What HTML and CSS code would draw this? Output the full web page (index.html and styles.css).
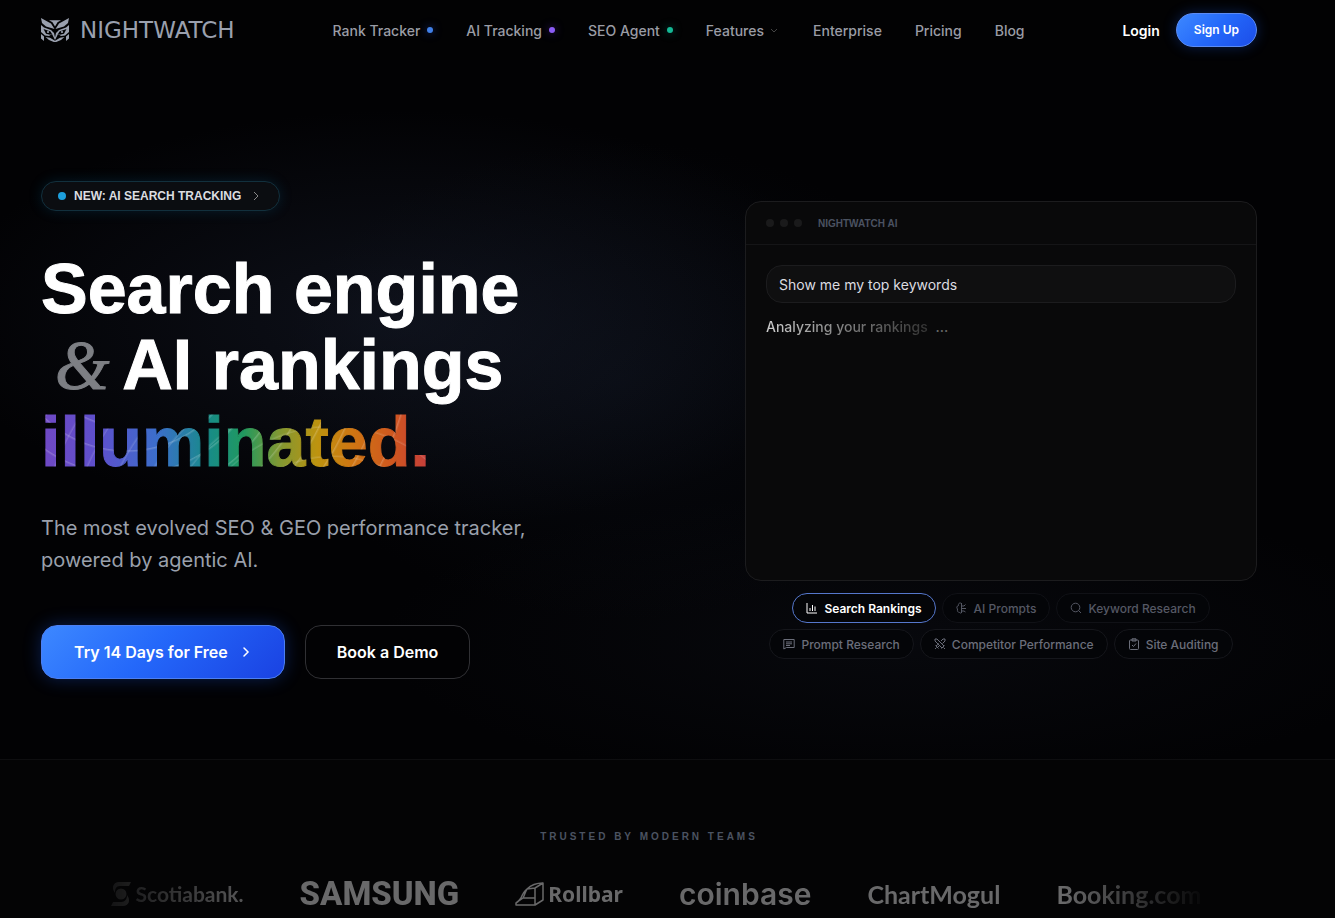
FILE: index.html
```
<!doctype html>
<html lang="en">
<head>
<meta charset="utf-8">
<meta name="viewport" content="width=device-width, initial-scale=1">
<title>Nightwatch</title>
<link rel="stylesheet" href="styles.css">
</head>
<body>
<header class="header wrap">
	<a class="brand" href="#">
		<svg width="28" height="24" viewBox="0 0 28 24" fill="currentColor" aria-hidden="true">
			<path d="M0 0l10 5.500 3.500 5.500L5 8.500 1 5z"/>
			<path d="M28 0L18 5.500 14.500 11 23 8.500 27 5z"/>
			<path d="M8 2.200h12l-3.500 2L14 8.500l-2.500-4.300z"/>
			<path d="M0 7l3 2.500 7 2.500 3 3 1 4.500 1-4.500 3-3 7-2.500L28 7v7l-4 3.500-4 .5-3-2-3 6-3-6-3 2-4-.5L0 14z"/>
			<path d="M2.500 11l7 2.500L11 16l-2 .8-4-1zM25.500 11l-7 2.500L17 16l2 .8 4-1z" fill="#020204"/>
			<circle cx="7" cy="14" r="1.100"/><circle cx="21" cy="14" r="1.100"/>
			<path d="M0 16l3 2.500V23l-3-2.500zM28 16l-3 2.500V23l3-2.500zM4.500 19l4.500.8 5 3 5-3 4.500-.8-3.500 3-6 2.500L8 22z"/>
		</svg>
		<span>NIGHTWATCH</span>
	</a>
	<nav class="nav">
		<a href="#">Rank Tracker <i class="dot blue"></i></a>
		<a href="#">AI Tracking <i class="dot purple"></i></a>
		<a href="#">SEO Agent <i class="dot green"></i></a>
		<a class="drop" href="#">Features
			<svg width="12" height="12" viewBox="0 0 12 12" fill="none" stroke="#444" aria-hidden="true"><path d="M3 5l3 3 3-3"/></svg>
		</a>
		<a href="#">Enterprise</a>
		<a href="#">Pricing</a>
		<a href="#">Blog</a>
	</nav>
	<div class="account">
		<a class="login" href="#">Login</a>
		<a class="signup" href="#">Sign Up</a>
	</div>
</header>

<main>
<section class="hero wrap">
	<div class="intro">
		<a class="badge" href="#">
			<i></i>NEW: AI SEARCH TRACKING
			<svg width="14" height="12" viewBox="0 0 14 12" fill="none" stroke="#888" aria-hidden="true"><path d="M5 2l4 4-4 4"/></svg>
		</a>
		<h1>Search engine<br><span class="amp">&amp;</span> AI rankings<br><span class="lit">illuminated.</span></h1>
		<p>The most evolved SEO &amp; GEO performance tracker, powered by agentic AI.</p>
		<div class="actions">
			<a class="btn primary" href="#">Try 14 Days for Free
				<svg width="12" height="12" viewBox="0 0 12 12" fill="none" stroke="currentColor" stroke-width="1.500" stroke-linecap="round" aria-hidden="true"><path d="M4 2l4 4-4 4"/></svg>
			</a>
			<a class="btn" href="#">Book a Demo</a>
		</div>
	</div>

	<div class="demo">
		<div class="panel">
			<div class="panel-head"><i></i><i></i><i></i><span>NIGHTWATCH AI</span></div>
			<div class="panel-body">
				<input type="text" aria-label="Prompt" value="Show me my top keywords">
				<div class="status"><span>Analyzing your rankings</span> <em>...</em></div>
			</div>
		</div>
		<div class="chips">
			<button class="chip active" type="button">
				<svg viewBox="0 0 12 12"><path d="M1 1v10h10M4 9V6M6.500 9V3M9 9V4.500"/></svg>Search Rankings
			</button>
			<button class="chip dim" type="button">
				<svg viewBox="0 0 12 12"><path d="M5.500 1v10M5.500 1.500C3.500 0 2 2 2.500 3.500.5 4 .5 6 1.500 7c-.5 2 .5 3.500 2 3.500.5 1 2 .5 2 0M5.500 4H8l1.500-1.500M5.500 6.500H10M5.500 9H8l1.500 1"/></svg>AI Prompts
			</button>
			<button class="chip dim" type="button">
				<svg viewBox="0 0 12 12"><circle cx="5.500" cy="5.500" r="4.300"/><path d="M8.500 8.500L11 11"/></svg>Keyword Research
			</button>
			<button class="chip" type="button">
				<svg viewBox="0 0 12 12"><path d="M.8 1.500h10.400v8H3.500L.8 11zM3 4h6M3 5.800h6M3 7.500h4"/></svg>Prompt Research
			</button>
			<button class="chip" type="button">
				<svg viewBox="0 0 12 12"><path d="M1 1h2l7 7M1 1v2l7 7M11 1H9L7 3M11 1v2L8.500 5.500M5 5.500L2 8M6 7l-2.500 2.500M1.500 7.500l3 3M7.500 10.500l3-3M1 11l1.500-1.500M11 11L9.500 9.500"/></svg>Competitor Performance
			</button>
			<button class="chip" type="button">
				<svg viewBox="0 0 12 12"><rect x="1.500" y="2" width="9" height="9.500" rx="1"/><path d="M4 .8h4v2.200H4zM4 7l1.500 1.500L8 5.500"/></svg>Site Auditing
			</button>
		</div>
	</div>
</section>

<section class="trusted">
	<div class="wrap">
		<h2>TRUSTED BY MODERN TEAMS</h2>
		<div class="logos">
			<span class="logo scotia">
				<svg width="20" height="24" viewBox="0 0 20 24" fill="currentColor" aria-hidden="true"><circle cx="10" cy="12" r="5.500"/><path d="M20 0l-2 4H9C5 4 4 7 4 11 0 6 2 0 8 0zM0 24l2-4h8c4 0 6-3 6-7 4 5 2 11-4 11z"/></svg>
				Scotiabank.
			</span>
			<span class="logo samsung">SAMSUNG</span>
			<span class="logo rollbar">
				<svg width="29" height="24" viewBox="0 0 29 24" fill="none" stroke="currentColor" stroke-width="1.500" stroke-linejoin="round" aria-hidden="true"><path d="M1 23v-2c2-1 3-2 5-5 2-5 3-7 6-9 4-4 9-6 16-6v17l-8 5zM1 21l7-5h12v7M12 7l8-1 8-5M20 6v10M12 7c-2 3-2 5-4 9M20 16v7"/></svg>
				Rollbar
			</span>
			<span class="logo coinbase">coinbase</span>
			<span class="logo mogul">ChartMogul</span>
			<span class="logo booking">Booking.com</span>
		</div>
	</div>
</section>
</main>
</body>
</html>
```
FILE: styles.css
```
* {
	box-sizing: border-box;
}
body {
	margin: 0;
	background: #020204;
	color: #fff;
	font-family: Inter, "Liberation Sans", sans-serif;
	overflow-x: hidden;
	background-image:
		radial-gradient(ellipse 460px 210px at 400px 320px, rgba(34,42,64,.36), transparent),
		radial-gradient(ellipse 340px 240px at 620px 380px, rgba(20,28,44,.28), transparent),
		radial-gradient(ellipse 520px 150px at 900px 640px, rgba(24,28,40,.25), transparent);
	background-repeat: no-repeat;
}
a {
	color: inherit;
	text-decoration: none;
}
.wrap {
	padding-left: 41px;
	padding-right: 78px;
}

/* header */
.header {
	display: flex;
	align-items: center;
	justify-content: space-between;
	height: 60px;
	background: #020203;
}
.brand {
	display: flex;
	align-items: center;
	gap: 11px;
	color: #9aa0ae;
	font: 23px "DejaVu Sans", sans-serif;
}
.nav {
	display: flex;
	gap: 33px;
	font-size: 14px;
	font-weight: 500;
	color: #9a9ca5;
}
.nav a {
	display: flex;
	align-items: center;
	gap: 7px;
}
.nav .drop {
	gap: 4px;
}
.dot {
	width: 6px;
	height: 6px;
	border-radius: 50%;
}
.blue {
	background: #4080e8;
	box-shadow: 0 0 8px #1d3a90;
}
.purple {
	background: #8b5cf6;
	box-shadow: 0 0 8px #3f1d80;
}
.green {
	background: #14b895;
	box-shadow: 0 0 8px #045747;
}
.account {
	display: flex;
	align-items: center;
	gap: 16px;
	font-size: 14px;
	font-weight: 600;
}
.signup {
	padding: 0 17px;
	border: 1px solid #5b8bf5;
	border-radius: 17px;
	background: linear-gradient(135deg, #3d88ff, #2468fa 50%, #1c4de8);
	box-shadow: 0 0 14px rgba(30,100,255,.3);
	font-size: 12px;
	line-height: 32px;
}

/* hero */
.hero {
	display: grid;
	grid-template-columns: 5fr 4fr;
	gap: 64px;
	align-items: center;
	padding-top: 121px;
	padding-bottom: 80px;
}
.badge {
	display: flex;
	align-items: center;
	gap: 8px;
	width: fit-content;
	height: 30px;
	padding: 0 16px;
	border: 1px solid #12303d;
	border-radius: 15px;
	background: #0b0d11;
	box-shadow: 0 0 14px rgba(14,120,170,.2);
	color: #dcdde0;
	font: bold 12px "Liberation Sans", sans-serif;
}
.badge i {
	width: 8px;
	height: 8px;
	border-radius: 50%;
	background: #1d9fdc;
}
h1 {
	margin: 40px 0 32px;
	font: bold 70px/76px "Liberation Sans", sans-serif;
	-webkit-text-stroke: 1px #fff;
}
.amp {
	margin-left: 14px;
	margin-right: -4px;
	color: #7d7f84;
	font-family: "Liberation Serif", serif;
	font-style: italic;
	font-weight: normal;
	-webkit-text-stroke: 1px #7d7f84;
}
.lit {
	background:
		repeating-radial-gradient(circle at 22% -90%, transparent 0 21px, rgba(255,255,255,.2) 22px, transparent 24px),
		repeating-radial-gradient(circle at 75% 220%, transparent 0 27px, rgba(255,255,255,.15) 28px, transparent 30px),
		linear-gradient(90deg, #7048c4, #5d50cc 15%, #3b6fcb 30%, #178b88 43%, #20995f 52%, #7f9834 61%, #bd930f 71%, #cf7612 80%, #cf5520 91%, #c43c3c);
	-webkit-background-clip: text;
	background-clip: text;
	color: transparent;
	-webkit-text-stroke: 1px transparent;
}
.intro p {
	max-width: 520px;
	margin: 0 0 49px;
	color: #9aa0ac;
	font-size: 20px;
	line-height: 32px;
}
.actions {
	display: flex;
	gap: 20px;
}
.btn {
	display: flex;
	align-items: center;
	gap: 12px;
	height: 54px;
	padding: 0 31px;
	border: 1px solid #303034;
	border-radius: 16px;
	background: #020204;
	font-size: 16px;
	font-weight: 600;
}
.primary {
	padding: 0 32px;
	border-color: #4c7ff2;
	background: linear-gradient(135deg, #3d88ff, #2468fa 45%, #1a42e2);
	box-shadow: 0 0 18px rgba(30,100,255,.3);
}

/* demo panel */
.panel {
	height: 380px;
	border: 1px solid #1c1c1e;
	border-radius: 16px;
	background: #09090a;
}
.panel-head {
	display: flex;
	align-items: center;
	gap: 6px;
	height: 43px;
	padding: 0 20px;
	border-bottom: 1px solid #151517;
	color: #4b5261;
	font: bold 10px "Liberation Sans", sans-serif;
}
.panel-head i {
	width: 8px;
	height: 8px;
	border-radius: 50%;
	background: #1a1a1b;
}
.panel-head span {
	margin-left: 10px;
}
.panel-body {
	padding: 20px;
}
.panel-body input {
	display: block;
	width: 100%;
	height: 38px;
	padding: 0 12px;
	border: 1px solid #1c1c1e;
	border-radius: 16px;
	background: #0f0f10;
	color: #dcdce0;
	font: 14px Inter, sans-serif;
}
.status {
	margin-top: 14px;
	color: #666;
	font-size: 14px;
	font-weight: 500;
	line-height: 20px;
}
.status span {
	background: linear-gradient(90deg, #ccc, #777 55%, #333);
	-webkit-background-clip: text;
	background-clip: text;
	color: transparent;
}
.status em {
	margin-left: 4px;
	font-style: normal;
}
.chips {
	display: flex;
	flex-wrap: wrap;
	justify-content: center;
	gap: 6px;
	margin-top: 12px;
}
.chip {
	display: flex;
	align-items: center;
	gap: 6px;
	height: 30px;
	padding: 0 13px;
	border: 1px solid #15161b;
	border-radius: 15px;
	background: #040508;
	color: #6b6e7a;
	font: 500 12px Inter, sans-serif;
}
.chip svg {
	width: 12px;
	height: 12px;
	fill: none;
	stroke: currentColor;
}
.chip.dim {
	color: #555864;
	border-color: #101116;
}
.chip.active {
	border-color: #5577cc;
	color: #fff;
	font-weight: 600;
}

/* trusted */
.trusted {
	padding-top: 70px;
	border-top: 1px solid #0e0e10;
	background: #040405;
	overflow: hidden;
}
h2 {
	margin: 0 0 34px;
	color: #4b5361;
	font: bold 10px/14px "Liberation Sans", sans-serif;
	letter-spacing: 3px;
	text-align: center;
}
.logos {
	display: flex;
	align-items: center;
	justify-content: center;
	gap: 56px;
	height: 32px;
	margin-bottom: 8px;
	padding-left: 14px;
	color: #69696a;
	-webkit-mask-image: linear-gradient(90deg, transparent 3%, #000 20%, #000 84%, transparent 96%);
	mask-image: linear-gradient(90deg, transparent 3%, #000 20%, #000 84%, transparent 96%);
}
.logo {
	display: flex;
	align-items: center;
	gap: 5px;
	font-weight: 700;
	line-height: 32px;
	white-space: nowrap;
}
.scotia {
	font-family: Lato, sans-serif;
	font-size: 21px;
}
.samsung {
	font-family: Roboto, sans-serif;
	font-size: 33px;
	font-weight: 800;
}
.rollbar {
	gap: 4px;
	font-family: "Noto Sans", sans-serif;
	font-size: 21px;
}
.coinbase {
	font-size: 30px;
	font-weight: 600;
}
.mogul {
	font-family: Lato, sans-serif;
	font-size: 25px;
}
.booking {
	font-family: Lato, sans-serif;
	font-size: 25px;
}
```
